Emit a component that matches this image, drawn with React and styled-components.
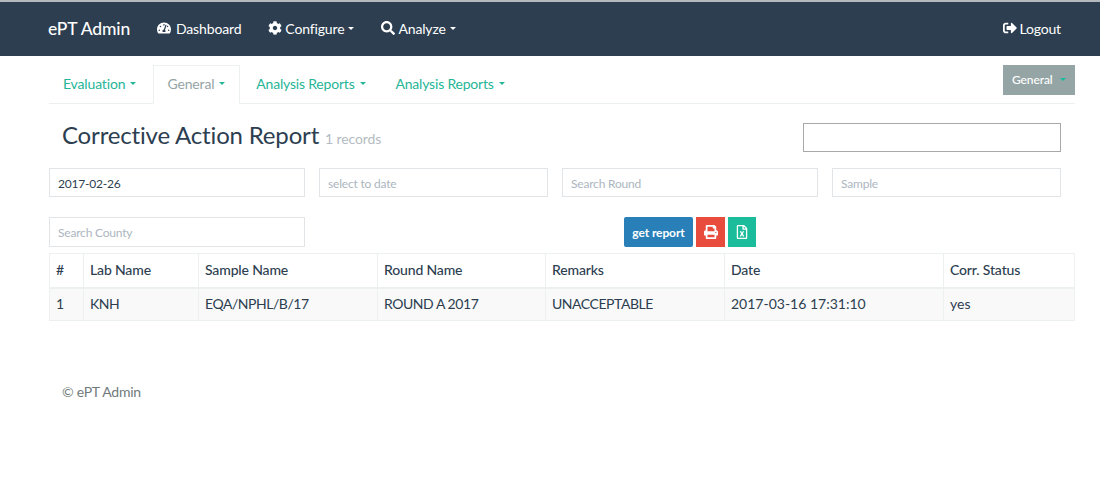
import styled, { createGlobalStyle } from 'styled-components';
import {
  FaTachometerAlt,
  FaCog,
  FaSearch,
  FaSignOutAlt,
  FaPrint,
  FaRegFileExcel
} from 'react-icons/fa';

const GlobalStyle = createGlobalStyle`
  html, body {
    margin: 0;
    padding: 0;
    background: #fff;
  }

  body {
    font-family: Lato, "Open Sans", sans-serif;
    font-size: 14px;
    color: #2c3e50;
    letter-spacing: -0.15px;
    overflow: hidden;
  }

  * {
    box-sizing: border-box;
  }
`;

const Page = styled.div`
  width: 1100px;
  height: 478px;
  border-top: 2px solid #b4b9bd;
  display: flex;
  flex-direction: column;
`;

const Navbar = styled.nav`
  height: 54px;
  flex-shrink: 0;
  background-color: #2c3e50;
  color: #fff;
  display: flex;
  align-items: center;
  padding: 0 39px 2px 48px;
`;

const Brand = styled.div`
  font-size: 17.5px;
  font-weight: 500;
  width: 109px;
`;

const NavLink = styled.div`
  display: flex;
  align-items: center;
  gap: ${props => props.$iconGap ?? 3}px;
  font-size: 14px;
  margin-right: ${props => props.$gap || 0}px;
  margin-left: ${props => (props.$end ? 'auto' : '0')};

  svg {
    font-size: 14px;
  }
`;

const Caret = styled.span`
  display: inline-block;
  width: 0;
  height: 0;
  margin-left: ${props => props.$left ?? 1}px;
  border-top: 3.5px solid ${props => props.$color || 'currentColor'};
  border-left: 3.5px solid transparent;
  border-right: 3.5px solid transparent;
`;

const Content = styled.main`
  padding: 9px 25px 0 49px;
  display: flex;
  flex-direction: column;
`;

const TabBar = styled.div`
  height: 39px;
  display: flex;
  align-items: flex-start;
  border-bottom: 1px solid #ecf0f1;
`;

const Tab = styled.div`
  height: 39px;
  padding: 0 14px 2px 13px;
  display: flex;
  align-items: center;
  font-size: 14px;
  letter-spacing: ${props => (props.$tight ? '-0.2px' : '-0.15px')};
  color: ${props => (props.$active ? '#95a5a6' : '#26b597')};
  background: ${props => (props.$active ? '#fff' : 'transparent')};
  border: 1px solid ${props => (props.$active ? '#ecf0f1' : 'transparent')};
  border-bottom-color: ${props => (props.$active ? '#fff' : 'transparent')};
  margin-right: ${props => props.$gap ?? 1}px;
`;

const TabCaret = styled(Caret)`
  margin-left: 5px;
  color: #26b597;
`;

const GeneralButton = styled.button`
  margin-left: auto;
  width: 72px;
  height: 30px;
  padding: 0 0 2px 9px;
  border: 0;
  background: #95a5a6;
  color: #fff;
  font-family: inherit;
  font-size: 12px;
  font-weight: 500;
  letter-spacing: -0.1px;
  display: flex;
  align-items: center;
  text-align: left;
`;

const TitleRow = styled.div`
  display: flex;
  justify-content: space-between;
  align-items: flex-start;
  padding: 18px 14px 0 13px;
  height: 64px;
`;

const Title = styled.h1`
  margin: -1px 0 0;
  font-size: 24px;
  font-weight: 400;
  line-height: 27px;
  color: #2c3e50;
  letter-spacing: -0.17px;
`;

const Records = styled.small`
  font-size: 14px;
  color: #b4bcc2;
  letter-spacing: -0.1px;
`;

const SearchBox = styled.input`
  width: 258px;
  height: 29px;
  margin-top: 1px;
  border: 1px solid #a9a9a9;
  background: #fff;
  outline: none;
`;

const FilterRow = styled.div`
  display: grid;
  grid-template-columns: 256px 229px 256px 229px;
  gap: 14px;
`;

const ActionRow = styled.div`
  display: flex;
  margin-top: 20px;
`;

const Field = styled.input`
  width: ${props => (props.$fixed ? '256px' : '100%')};
  height: ${props => (props.$tall ? 30 : 29)}px;
  border: 1px solid #e1e5e8;
  border-radius: 0;
  padding: ${props => (props.$tall ? '0 8px' : '1px 8px 0')};
  font-family: inherit;
  font-size: 12px;
  letter-spacing: -0.2px;
  color: #2c3e50;
  background: #fff;
  outline: none;

  &::placeholder {
    color: #acb6c0;
    opacity: 1;
  }
`;

const Buttons = styled.div`
  display: flex;
  gap: 3px;
  margin-left: 319px;
`;

const ActionButton = styled.button`
  width: ${props => props.$width}px;
  height: 30px;
  padding: 0;
  border: 0;
  border-radius: ${props => props.$radius || 0}px;
  background: ${props => props.$bg};
  color: #fff;
  font-family: inherit;
  font-size: 12px;
  font-weight: 700;
  letter-spacing: -0.1px;
  display: flex;
  align-items: center;
  justify-content: center;

  svg {
    font-size: 14px;
  }
`;

const Table = styled.table`
  width: 1025px;
  margin-top: 6px;
  border-collapse: collapse;
  table-layout: fixed;
  font-size: 14px;
`;

const Th = styled.th`
  height: 34px;
  padding: 0 6px 2px;
  font-weight: 500;
  text-align: left;
  border: 1px solid #ecf0f1;
  border-bottom-width: 2px;
  color: #2c3e50;
`;

const Td = styled.td`
  height: 33px;
  padding: 0 6px 2px;
  background: #f9f9f9;
  border: 1px solid #ecf0f1;
  color: #2c3e50;
  letter-spacing: ${props => (props.$tight ? '-0.45px' : '0')};
`;

const Footer = styled.footer`
  margin-top: 62px;
  padding-left: 13px;
  font-size: 14px;
  line-height: 17px;
  letter-spacing: -0.25px;
  color: #6f7a7b;
`;

const columns = [
  { label: '#', width: 34, value: '1' },
  { label: 'Lab Name', width: 115, value: 'KNH', tight: true },
  { label: 'Sample Name', width: 179, value: 'EQA/NPHL/B/17', tight: true },
  { label: 'Round Name', width: 168, value: 'ROUND A 2017', tight: true },
  { label: 'Remarks', width: 179, value: 'UNACCEPTABLE', tight: true },
  { label: 'Date', width: 219, value: '2017-03-16 17:31:10' },
  { label: 'Corr. Status', width: 131, value: 'yes' }
];

const App = () => {
  return (
    <Page>
      <GlobalStyle />
      <Navbar>
        <Brand>ePT Admin</Brand>
        <NavLink $iconGap={5} $gap={27}><FaTachometerAlt /><span>Dashboard</span></NavLink>
        <NavLink $gap={27}><FaCog /><span>Configure</span><Caret /></NavLink>
        <NavLink><FaSearch /><span>Analyze</span><Caret /></NavLink>
        <NavLink $end $iconGap={2}><FaSignOutAlt /><span>Logout</span></NavLink>
      </Navbar>

      <Content>
        <TabBar>
          <Tab $gap={2}>Evaluation<TabCaret /></Tab>
          <Tab $active $gap={2}>General<TabCaret /></Tab>
          <Tab $tight>Analysis Reports<TabCaret /></Tab>
          <Tab $tight>Analysis Reports<TabCaret /></Tab>
          <GeneralButton>General<Caret $left={7} $color="#18bc9c" /></GeneralButton>
        </TabBar>

        <TitleRow>
          <Title>Corrective Action Report <Records>1 records</Records></Title>
          <SearchBox />
        </TitleRow>

        <FilterRow>
          <Field defaultValue="2017-02-26" />
          <Field placeholder="select to date" />
          <Field placeholder="Search Round" />
          <Field placeholder="Sample" />
        </FilterRow>

        <ActionRow>
          <Field $fixed $tall placeholder="Search County" />
          <Buttons>
            <ActionButton $width={69} $radius={2} $bg="#2980b9">get report</ActionButton>
            <ActionButton $width={29} $bg="#e74c3c"><FaPrint /></ActionButton>
            <ActionButton $width={28} $bg="#1abc9c"><FaRegFileExcel /></ActionButton>
          </Buttons>
        </ActionRow>

        <Table>
          <colgroup>
            {columns.map(col => <col key={col.label} width={col.width} />)}
          </colgroup>
          <thead>
            <tr>
              {columns.map(col => <Th key={col.label}>{col.label}</Th>)}
            </tr>
          </thead>
          <tbody>
            <tr>
              {columns.map(col => <Td key={col.label} $tight={col.tight}>{col.value}</Td>)}
            </tr>
          </tbody>
        </Table>

        <Footer>© ePT Admin</Footer>
      </Content>
    </Page>
  );
};

export default App;
